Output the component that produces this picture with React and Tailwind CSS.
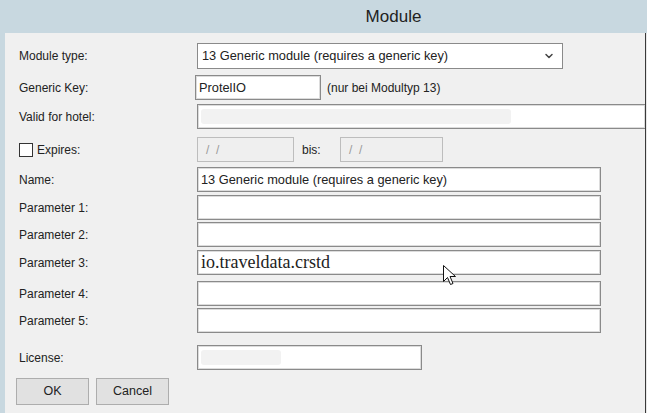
import { ChevronDown } from "lucide-react";

const font = { fontFamily: '"Liberation Sans", Arial, sans-serif' };

function Field({ className = "", children }) {
  return (
    <div className={`flex h-[25px] items-center border border-[#8a8a8a] bg-white px-[3px] text-[12.8px] text-[#222] shadow-[inset_0_0_0_1px_#dcdcdc] ${className}`}>
      {children}
    </div>
  );
}

function DateField({ className = "" }) {
  return (
    <div className={`flex h-[25px] items-center border border-[#bdbdbd] bg-[#efefef] pl-[8px] text-[12px] text-[#9a9a9a] ${className}`}>
      /&nbsp;&nbsp;/
    </div>
  );
}

function Row({ label, top, children }) {
  return (
    <div className={`flex items-center ${top}`}>
      <div className="w-[178px] shrink-0 text-[12px] text-[#222]">{label}</div>
      {children}
    </div>
  );
}

function Cursor() {
  return (
    <svg className="absolute left-[443px] top-[265px]" width="13" height="21" viewBox="0 0 13 21">
      <path d="M0.5 0.5 L0.5 16.5 L4.5 12.5 L7.5 19.5 L10 18.5 L7 11.5 L12.5 11.5 Z" fill="#fff" stroke="#111" strokeWidth="1" strokeLinejoin="round" />
    </svg>
  );
}

export default function App() {
  return (
    <div className="relative flex h-[413px] w-[647px] flex-col overflow-hidden bg-[#c8d8e0]" style={font}>
      <div className="flex h-[33px] shrink-0 items-center justify-center pl-[140px] text-[17px] text-[#222]">Module</div>
      <div className="flex flex-1 pl-[5px]">
        <div className="flex-1 border-r border-[#3a3a3a] bg-[#f0f0f0] pl-[14px] pt-[10px]">
          <Row label="Module type:">
            <div className="flex h-[26px] w-[366px] items-center justify-between border border-[#8a8a8a] bg-white pl-[4px] pr-[7px] text-[12.8px] text-[#222]">
              <span>13 Generic module (requires a generic key)</span>
              <ChevronDown size={12} strokeWidth={3} color="#444" />
            </div>
          </Row>
          <Row label="Generic Key:" top="mt-[6px]">
            <Field className="-ml-[2px] w-[126px]">ProtelIO</Field>
            <span className="ml-[6px] text-[12px] text-[#222]">(nur bei Modultyp 13)</span>
          </Row>
          <Row label="Valid for hotel:" top="mt-[4px]">
            <Field className="flex-1 border-r-0">
              <div className="h-[15px] w-[310px] rounded-[3px] bg-[#f2f2f2]" />
            </Field>
          </Row>
          <Row label="" top="mt-[8px]">
            <div className="-ml-[178px] flex w-[178px] items-center text-[12px] text-[#222]">
              <span className="mr-[4px] h-[14px] w-[14px] border border-[#333] bg-white" />
              Expires:
            </div>
            <DateField className="w-[97px]" />
            <span className="ml-[8px] w-[38px] text-[12px] text-[#222]">bis:</span>
            <DateField className="w-[103px]" />
          </Row>
          <Row label="Name:" top="mt-[5px]">
            <Field className="w-[404px]">13 Generic module (requires a generic key)</Field>
          </Row>
          <Row label="Parameter 1:" top="mt-[3px]">
            <Field className="w-[404px]" />
          </Row>
          <Row label="Parameter 2:" top="mt-[2px]">
            <Field className="w-[404px]" />
          </Row>
          <Row label="Parameter 3:" top="mt-[3px]">
            <Field className="w-[404px]">
              <span className="text-[18px] text-[#222]" style={{ fontFamily: '"Liberation Serif", "Times New Roman", serif' }}>
                io.traveldata.crstd
              </span>
            </Field>
          </Row>
          <Row label="Parameter 4:" top="mt-[6px]">
            <Field className="w-[404px]" />
          </Row>
          <Row label="Parameter 5:" top="mt-[2px]">
            <Field className="w-[404px]" />
          </Row>
          <Row label="License:" top="mt-[12px]">
            <Field className="w-[225px]">
              <div className="h-[15px] w-[80px] rounded-[3px] bg-[#f2f2f2]" />
            </Field>
          </Row>
          <div className="-ml-[3px] mt-[8px] flex gap-[7px]">
            <button type="button" className="h-[27px] w-[73px] border border-[#adadad] bg-[#e1e1e1] text-[12.5px] text-[#222]">
              OK
            </button>
            <button type="button" className="h-[27px] w-[73px] border border-[#adadad] bg-[#e1e1e1] text-[12.5px] text-[#222]">
              Cancel
            </button>
          </div>
        </div>
        <div className="w-[1px] bg-[#e8e8e8]" />
      </div>
      <Cursor />
    </div>
  );
}
